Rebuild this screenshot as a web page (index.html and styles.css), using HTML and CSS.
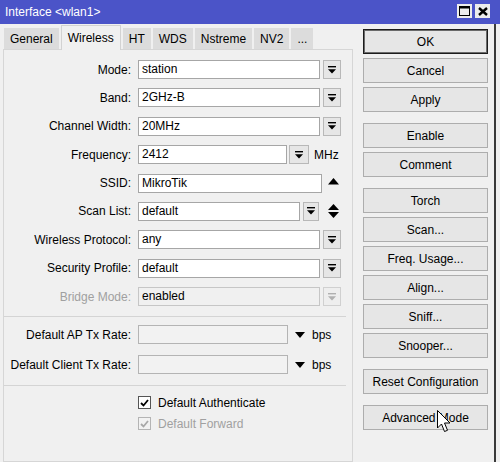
FILE: index.html
```html
<!DOCTYPE html>
<html>
<head>
<meta charset="utf-8">
<link rel="stylesheet" href="styles.css">
</head>
<body>
<div class="window">
  <div class="titlebar">
    <span class="title">Interface &lt;wlan1&gt;</span>
    <div class="tbtns">
      <span class="tb"><svg width="11" height="10" viewBox="0 0 11 10"><rect x="0.5" y="0.5" width="10" height="9" fill="none" stroke="#000"/><rect x="0" y="0" width="11" height="2.5" fill="#000"/></svg></span>
      <span class="tb"><svg width="10" height="9" viewBox="0 0 10 9"><path d="M1 1 L9 8 M9 1 L1 8" stroke="#000" stroke-width="2.4" fill="none"/></svg></span>
    </div>
  </div>
  <div class="body">
    <div class="left">
      <div class="tabs">
        <span class="tab">General</span>
        <span class="tab active">Wireless</span>
        <span class="tab">HT</span>
        <span class="tab">WDS</span>
        <span class="tab">Nstreme</span>
        <span class="tab">NV2</span>
        <span class="tab">...</span>
      </div>
      <div class="panel">
        <div class="row">
          <span class="lbl">Mode:</span>
          <span class="inp w182">station</span>
          <span class="dd"><svg width="8" height="8" viewBox="0 0 8 8"><rect x="0" y="0" width="8" height="1.4" fill="#000"/><polygon points="0,3.2 8,3.2 4,7.6" fill="#000"/></svg></span>
        </div>
        <div class="row">
          <span class="lbl">Band:</span>
          <span class="inp w182">2GHz-B</span>
          <span class="dd"><svg width="8" height="8" viewBox="0 0 8 8"><rect x="0" y="0" width="8" height="1.4" fill="#000"/><polygon points="0,3.2 8,3.2 4,7.6" fill="#000"/></svg></span>
        </div>
        <div class="row">
          <span class="lbl">Channel Width:</span>
          <span class="inp w182">20MHz</span>
          <span class="dd"><svg width="8" height="8" viewBox="0 0 8 8"><rect x="0" y="0" width="8" height="1.4" fill="#000"/><polygon points="0,3.2 8,3.2 4,7.6" fill="#000"/></svg></span>
        </div>
        <div class="row">
          <span class="lbl">Frequency:</span>
          <span class="inp w149">2412</span>
          <span class="dd dd-f"><svg width="8" height="8" viewBox="0 0 8 8"><rect x="0" y="0" width="8" height="1.4" fill="#000"/><polygon points="0,3.2 8,3.2 4,7.6" fill="#000"/></svg></span>
          <span class="unit-mhz">MHz</span>
        </div>
        <div class="row">
          <span class="lbl">SSID:</span>
          <span class="inp w184">MikroTik</span>
          <span class="up"><svg width="11" height="7" viewBox="0 0 11 7"><polygon points="5.5,0 11,6.5 0,6.5" fill="#000"/></svg></span>
        </div>
        <div class="row">
          <span class="lbl">Scan List:</span>
          <span class="inp w162">default</span>
          <span class="dd dd-s"><svg width="8" height="8" viewBox="0 0 8 8"><rect x="0" y="0" width="8" height="1.4" fill="#000"/><polygon points="0,3.2 8,3.2 4,7.6" fill="#000"/></svg></span>
          <span class="updown"><svg width="11" height="14" viewBox="0 0 11 14"><polygon points="5.5,0 11,6 0,6" fill="#000"/><polygon points="0,8 11,8 5.5,14" fill="#000"/></svg></span>
        </div>
        <div class="row">
          <span class="lbl">Wireless Protocol:</span>
          <span class="inp w182">any</span>
          <span class="dd"><svg width="8" height="8" viewBox="0 0 8 8"><rect x="0" y="0" width="8" height="1.4" fill="#000"/><polygon points="0,3.2 8,3.2 4,7.6" fill="#000"/></svg></span>
        </div>
        <div class="row">
          <span class="lbl">Security Profile:</span>
          <span class="inp w182">default</span>
          <span class="dd"><svg width="8" height="8" viewBox="0 0 8 8"><rect x="0" y="0" width="8" height="1.4" fill="#000"/><polygon points="0,3.2 8,3.2 4,7.6" fill="#000"/></svg></span>
        </div>
        <div class="row last">
          <span class="lbl dis">Bridge Mode:</span>
          <span class="inp w182 inp-dis">enabled</span>
          <span class="dd dd-dis"><svg width="8" height="8" viewBox="0 0 8 8"><rect x="0" y="0" width="8" height="1.4" fill="#b0b0b0"/><polygon points="0,3.2 8,3.2 4,7.6" fill="#b0b0b0"/></svg></span>
        </div>
        <div class="sep sep1"></div>
        <div class="row rate">
          <span class="lbl">Default AP Tx Rate:</span>
          <span class="inp w150 inp-empty"></span>
          <span class="down"><svg width="10" height="6" viewBox="0 0 10 6"><polygon points="0,0 10,0 5,6" fill="#000"/></svg></span>
          <span class="unit">bps</span>
        </div>
        <div class="row rate last">
          <span class="lbl">Default Client Tx Rate:</span>
          <span class="inp w150 inp-empty"></span>
          <span class="down"><svg width="10" height="6" viewBox="0 0 10 6"><polygon points="0,0 10,0 5,6" fill="#000"/></svg></span>
          <span class="unit">bps</span>
        </div>
        <div class="sep sep2"></div>
        <div class="check">
          <span class="cb"><svg width="9" height="8" viewBox="0 0 9 8"><path d="M1 4 L3.5 6.5 L8 1" stroke="#000" stroke-width="1.8" fill="none"/></svg></span>
          <span>Default Authenticate</span>
        </div>
        <div class="check check-dis">
          <span class="cb"><svg width="9" height="8" viewBox="0 0 9 8"><path d="M1 4 L3.5 6.5 L8 1" stroke="#a8a8a8" stroke-width="1.8" fill="none"/></svg></span>
          <span>Default Forward</span>
        </div>
      </div>
    </div>
    <div class="right">
      <div class="btn ok">OK</div>
      <div class="btn">Cancel</div>
      <div class="btn">Apply</div>
      <div class="btn grp">Enable</div>
      <div class="btn">Comment</div>
      <div class="btn grp">Torch</div>
      <div class="btn">Scan...</div>
      <div class="btn">Freq. Usage...</div>
      <div class="btn">Align...</div>
      <div class="btn">Sniff...</div>
      <div class="btn">Snooper...</div>
      <div class="btn grp">Reset Configuration</div>
      <div class="btn grp">Advanced Mode</div>
    </div>
  </div>
  <svg class="cursor" width="14" height="23" viewBox="0 0 14 23"><path d="M0.5 0.5 L0.5 18 L4.5 14 L7.5 21.5 L10.5 20.3 L7.5 13 L13 13 Z" fill="#fff" stroke="#000" stroke-width="1"/></svg>
</div>
</body>
</html>
```

FILE: styles.css
```css
html, body {
  margin: 0;
  padding: 0;
}
body {
  background: #f0f0f0;
  font-family: "Liberation Sans", Arial, sans-serif;
  font-size: 12px;
  color: #000;
  width: 500px;
  height: 462px;
  overflow: hidden;
}
.window {
  position: relative;
  width: 500px;
  height: 462px;
}
.titlebar {
  height: 24px;
  background: #4b54c8;
  display: flex;
  align-items: center;
  padding: 0 10px 0 5px;
  color: #fff;
  font-size: 12px;
}
.title {
  flex: 1;
}
.tbtns {
  display: flex;
  gap: 3px;
  margin-top: -2px;
}
.tb {
  width: 15px;
  height: 14px;
  background: #ececec;
  display: flex;
  align-items: center;
  justify-content: center;
}
.body {
  display: flex;
  width: 494px;
  height: 438px;
  border-right: 2px solid #3a3a3a;
}
.left {
  width: 353px;
  padding-left: 3px;
  box-sizing: border-box;
  display: flex;
  flex-direction: column;
}
.tabs {
  height: 25px;
  display: flex;
  align-items: flex-end;
  gap: 2px;
  padding-left: 1px;
}
.tab {
  height: 21px;
  padding: 0 6px;
  background: #dcdcdc;
  display: flex;
  align-items: center;
  box-sizing: border-box;
}
.tab.active {
  height: 25px;
  padding: 0 6px;
  background: #f0f0f0;
  border: 1px solid #d2d2d2;
  border-bottom: none;
  margin-bottom: -1px;
  position: relative;
  z-index: 1;
}
.panel {
  flex: 1;
  width: 350px;
  box-sizing: border-box;
  border: 1px solid #d6d6d6;
  background: #f0f0f0;
  padding-top: 10px;
}
.row {
  display: flex;
  align-items: center;
  height: 19px;
  margin-bottom: 9.375px;
}
.row.last {
  margin-bottom: 0;
}
.row.rate {
  margin-bottom: 11px;
}
.row.rate.last {
  margin-bottom: 0;
}
.lbl {
  width: 127px;
  text-align: right;
  margin-right: 7px;
  white-space: nowrap;
}
.lbl.dis {
  color: #a0a0a0;
}
.inp {
  height: 19px;
  box-sizing: border-box;
  border: 1px solid #a6a6a6;
  background: #fff;
  padding-left: 3px;
  line-height: 17px;
}
.inp-dis {
  background: #f0f0f0;
  border-color: #c6c6c6;
}
.inp-empty {
  background: #f2f2f2;
  border-color: #b4b4b4;
}
.w182 { width: 182px; }
.w184 { width: 184px; }
.w149 { width: 149px; }
.w150 { width: 150px; }
.w162 { width: 162px; }
.dd {
  width: 18px;
  height: 19px;
  box-sizing: border-box;
  margin-left: 3px;
  border: 1px solid #b8b8b8;
  background: #e6e6e6;
  display: flex;
  align-items: center;
  justify-content: center;
}
.dd-f {
  width: 20px;
  margin-left: 2px;
}
.dd-s {
  width: 16px;
}
.dd-dis {
  background: #eeeeee;
  border-color: #d0d0d0;
}
.unit-mhz {
  margin-left: 5px;
}
.up {
  margin-left: 6px;
  display: flex;
  margin-top: -4px;
}
.updown {
  margin-left: 9px;
  display: flex;
}
.down {
  margin-left: 7px;
  display: flex;
}
.unit {
  margin-left: 7px;
}
.sep {
  height: 1px;
  background: #d4d4d4;
  margin-right: 6px;
}
.sep1 {
  margin-top: 10px;
  margin-bottom: 8px;
}
.sep2 {
  margin-top: 11px;
  margin-bottom: 10px;
}
.check {
  display: flex;
  align-items: center;
  height: 13px;
  padding-left: 134px;
  margin-bottom: 8px;
}
.cb {
  width: 13px;
  height: 13px;
  box-sizing: border-box;
  border: 1px solid #555;
  background: #fff;
  margin-right: 7px;
  display: flex;
  align-items: center;
  justify-content: center;
}
.check-dis {
  color: #a0a0a0;
}
.check-dis .cb {
  border-color: #b4b4b4;
  background: #f2f2f2;
}
.right {
  margin-left: 10px;
  margin-top: 5px;
  width: 125px;
  display: flex;
  flex-direction: column;
  gap: 4px;
}
.btn {
  height: 25px;
  box-sizing: border-box;
  border: 1px solid #adadad;
  background: #e6e6e6;
  display: flex;
  align-items: center;
  justify-content: center;
  white-space: nowrap;
}
.btn.ok {
  border: 1px solid #1c1c1c;
  box-shadow: inset 0 0 0 1px #6a6a6a;
}
.btn.grp {
  margin-top: 7px;
}
.cursor {
  position: absolute;
  left: 437px;
  top: 410px;
}
```
